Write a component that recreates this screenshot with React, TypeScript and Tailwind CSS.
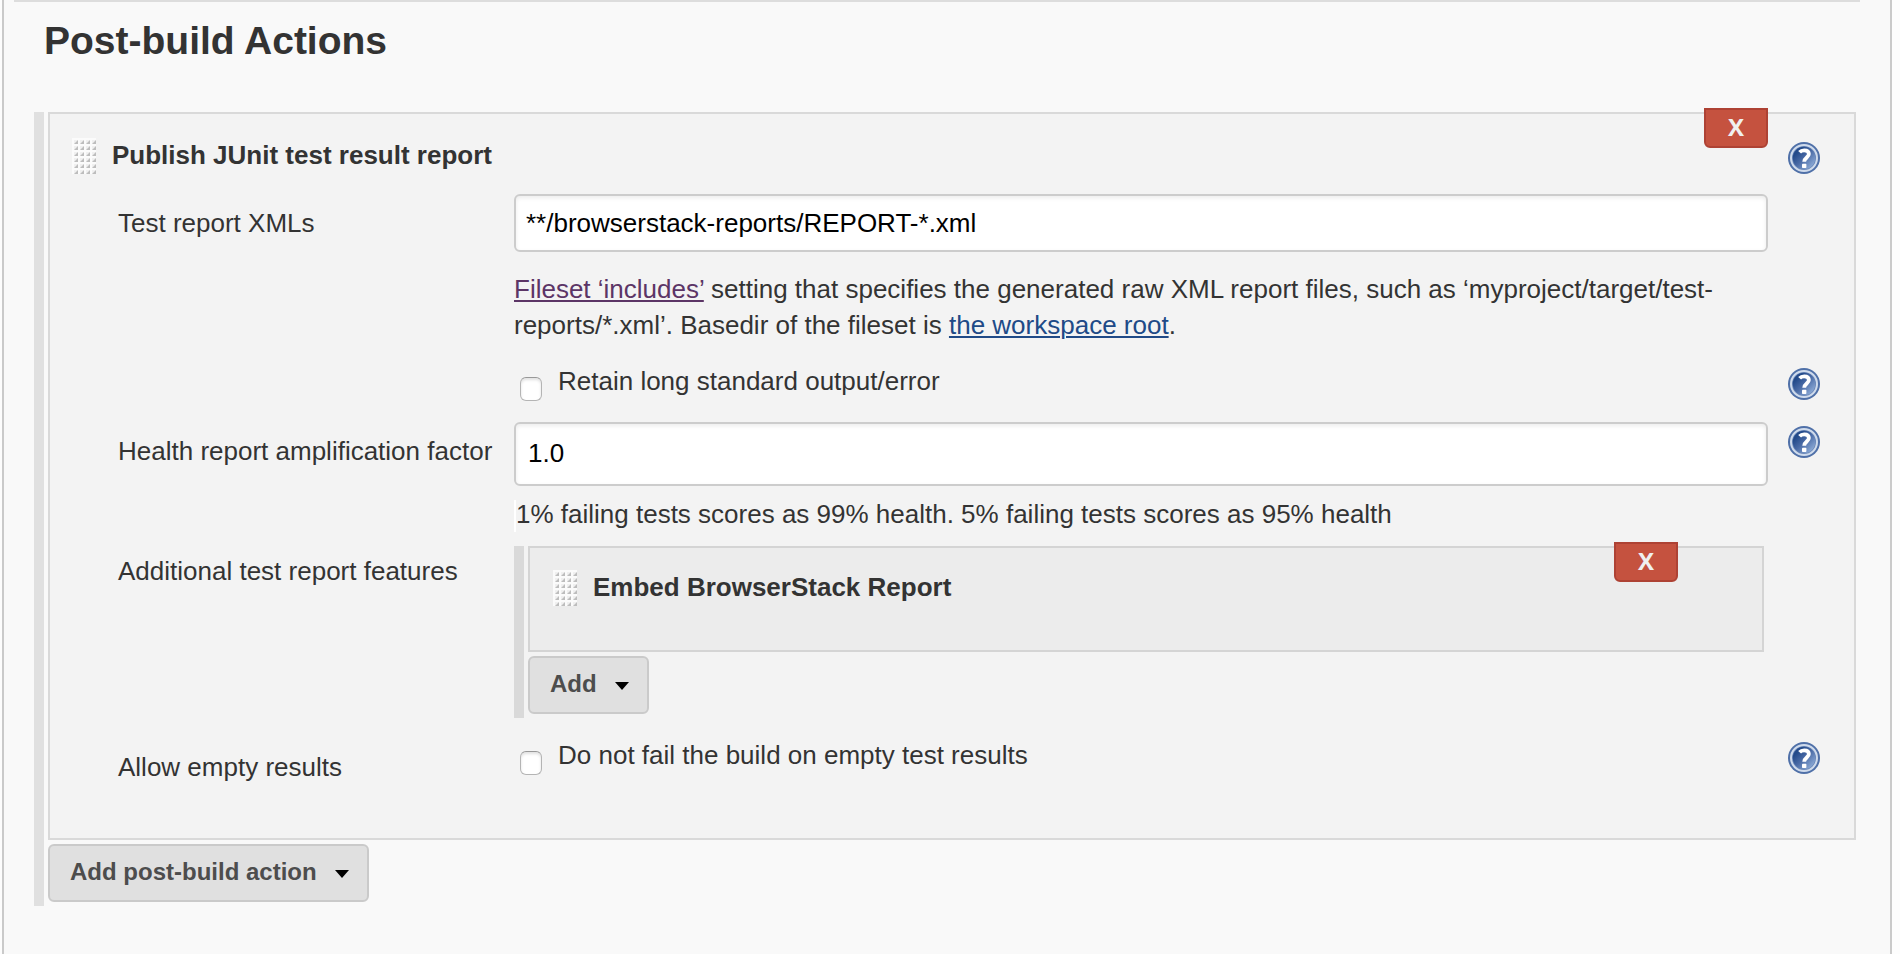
import type { ReactNode } from "react";

function HelpButton({ topic }: { topic: string }) {
  return (
    <button type="button" aria-label={`Help for ${topic}`} className="block size-8 shrink-0 cursor-pointer">
      <svg viewBox="0 0 32 32" className="size-8" aria-hidden="true">
        <defs>
          <linearGradient id="help-fill" x1="0.1" y1="0.1" x2="0.9" y2="0.9">
            <stop offset="0.15" stopColor="#234a8a" />
            <stop offset="0.5" stopColor="#4a6ba6" />
            <stop offset="1" stopColor="#8fadd8" />
          </linearGradient>
        </defs>
        <circle cx="16" cy="16" r="16" fill="#4f70a8" />
        <circle cx="16" cy="16" r="13" fill="#6a87b8" stroke="#cfdbec" strokeWidth="2" />
        <circle cx="16" cy="16" r="11.2" fill="url(#help-fill)" />
        <path
          d="M11.6 10.2C12.8 8.8 14.4 8.3 16.2 8.3c2.9 0 4.7 1.4 4.7 3.7 0 3.4-4.7 3.6-4.7 7.8"
          fill="none"
          stroke="#fff"
          strokeWidth="3.8"
        />
        <rect x="14" y="21.8" width="4.4" height="4.2" rx="0.8" fill="#fff" />
      </svg>
    </button>
  );
}

function DragHandle() {
  const cells = Array.from({ length: 24 }, (_, i) => ({ x: (i % 4) * 6, y: Math.floor(i / 4) * 6 }));
  return (
    <svg viewBox="0 0 24 36" className="h-9 w-6 shrink-0 cursor-move" aria-hidden="true">
      <rect width="24" height="36" fill="#f0f0f0" />
      {cells.map(({ x, y }) => (
        <g key={`${x}-${y}`}>
          <path d={`M${x} ${y}h6v2h-4v4h-2z`} fill="#fbfbfb" />
          <path d={`M${x + 6} ${y + 2}v4h-4z`} fill="#bdbdbd" />
          <path d={`M${x + 2} ${y + 6}l4-4`} stroke="#d8d8d8" strokeWidth="1" />
        </g>
      ))}
    </svg>
  );
}

function DeleteButton({ label, className }: { label: string; className: string }) {
  return (
    <button
      type="button"
      aria-label={label}
      className={`absolute -top-1.5 h-10 w-16 cursor-pointer rounded-b-md border-2 border-[#ae4234] bg-[#c5523f] pb-0.5 text-center font-['Open_Sans',sans-serif] text-2xl leading-8 font-bold text-[#f0f0f0] ${className}`}
    >
      X
    </button>
  );
}

function MenuButton({ children }: { children: ReactNode }) {
  return (
    <button
      type="button"
      className="mt-1 flex h-[58px] cursor-pointer items-center gap-[18px] rounded-md border-2 border-[#cacaca] bg-[#e0e0e0] pr-[18px] pb-0.5 pl-5 text-2xl font-bold text-[#4d4d4d]"
    >
      {children}
      <svg viewBox="0 0 14 8" className="mt-1 h-2 w-3.5" aria-hidden="true">
        <path d="M0 0h14L7 8z" fill="#000" />
      </svg>
    </button>
  );
}

function Row({ label, help, children }: { label?: ReactNode; help?: ReactNode; children: ReactNode }) {
  return (
    <div className="grid grid-cols-[396px_minmax(0,1fr)_86px]">
      <div>{label}</div>
      <div>{children}</div>
      <div className="pl-5">{help}</div>
    </div>
  );
}

const inputStyle =
  "block w-full rounded-md border-2 border-[#cccccc] bg-white text-[26px] text-black shadow-[inset_0_2px_4px_rgba(0,0,0,0.08)] outline-none";

function Check({ id, children }: { id: string; children: ReactNode }) {
  return (
    <div className="flex items-start gap-4 pl-1.5">
      <input
        id={id}
        type="checkbox"
        className="mt-3.5 h-6 w-[22px] appearance-none rounded-md border border-[#b4b4b4] border-t-[#989898] bg-white shadow-[inset_0_2px_3px_rgba(0,0,0,0.12)] checked:bg-[#3b5f9d]"
      />
      <label htmlFor={id}>{children}</label>
    </div>
  );
}

export default function App() {
  return (
    <div className="min-h-screen bg-[#fdfdfd] pr-2 pl-0.5 font-['Liberation_Sans',Arial,sans-serif] text-[26px] leading-9 text-[#333333]">
      <main className="min-h-screen border-x-2 border-[#cacaca] bg-[#f9f9f9] pr-[30px] pl-2.5">
        <hr className="border-t-2 border-[#dddddd]" />
        <section className="pt-[15px] pl-5">
          <h1 className="pl-2.5 text-[39px] leading-[48px] font-bold">Post-build Actions</h1>

          <div className="mt-[47px] mr-1 border-l-10 border-[#e0e0e0] pb-1 pl-1">
            <div className="relative border-2 border-[#d9d9d9] bg-[#f3f3f3] pb-[53px]">
              <DeleteButton label="Delete Publish JUnit test result report" className="right-[86px]" />
              <div className="flex h-20 items-start pt-[23px] pl-[22px]">
                <div className="pt-px">
                  <DragHandle />
                </div>
                <h2 className="flex-1 pl-4 font-bold">Publish JUnit test result report</h2>
                <div className="pt-[5px] pr-[34px]">
                  <HelpButton topic="Publish JUnit test result report" />
                </div>
              </div>

              <div className="pl-[68px]">
                <Row
                  label={
                    <label htmlFor="xmls" className="block pt-[11px]">
                      Test report XMLs
                    </label>
                  }
                >
                  <input
                    id="xmls"
                    type="text"
                    defaultValue="**/browserstack-reports/REPORT-*.xml"
                    className={`${inputStyle} h-[58px] px-2.5`}
                  />
                  <p className="mt-[19px]">
                    <a href="#fileset" className="text-[#5c3566] underline decoration-2 underline-offset-2">
                      Fileset ‘includes’
                    </a>{" "}
                    setting that specifies the generated raw XML report files, such as
                    ‘myproject/target/test-reports/*.xml’. Basedir of the fileset is{" "}
                    <a href="#workspace" className="text-[#204a87] underline decoration-2 underline-offset-2">
                      the workspace root
                    </a>
                    .
                  </p>
                </Row>

                <div className="mt-5 mb-[21px]">
                  <Row
                    help={
                      <div className="pt-[5px]">
                        <HelpButton topic="Retain long standard output/error" />
                      </div>
                    }
                  >
                    <Check id="retain">Retain long standard output/error</Check>
                  </Row>
                </div>

                <Row
                  label={
                    <label htmlFor="factor" className="block pt-[11px]">
                      Health report amplification factor
                    </label>
                  }
                  help={
                    <div className="pt-1">
                      <HelpButton topic="Health report amplification factor" />
                    </div>
                  }
                >
                  <input id="factor" type="text" defaultValue="1.0" className={`${inputStyle} h-16 px-3 pb-0.5`} />
                  <p className="mt-3.5 mb-3.5 border-l-2 border-white pb-1 leading-7">
                    1% failing tests scores as 99% health. 5% failing tests scores as 95% health
                  </p>
                </Row>

                <Row label={<p className="pt-[7px]">Additional test report features</p>}>
                  <div className="mr-1 border-l-10 border-[#d9d9d9] pb-1 pl-1">
                    <div className="relative h-[106px] border-2 border-[#d4d4d4] bg-[#ececec]">
                      <DeleteButton label="Delete Embed BrowserStack Report" className="right-[84px]" />
                      <div className="flex items-start pt-[21px] pl-[23px]">
                        <div className="pt-px">
                          <DragHandle />
                        </div>
                        <h3 className="pl-4 font-bold">Embed BrowserStack Report</h3>
                      </div>
                    </div>
                    <MenuButton>Add</MenuButton>
                  </div>
                </Row>

                <div className="mt-[19px]">
                  <Row
                    label={<p className="pt-3">Allow empty results</p>}
                    help={
                      <div className="pt-[5px]">
                        <HelpButton topic="Allow empty results" />
                      </div>
                    }
                  >
                    <Check id="allow-empty">Do not fail the build on empty test results</Check>
                  </Row>
                </div>
              </div>
            </div>
            <MenuButton>Add post-build action</MenuButton>
          </div>
        </section>
      </main>
    </div>
  );
}
